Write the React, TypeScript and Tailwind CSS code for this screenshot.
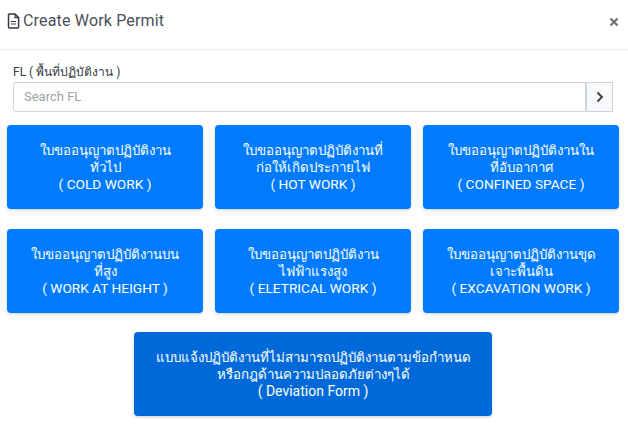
const font = "font-['Roboto','Noto_Sans','Noto_Sans_CJK_SC',sans-serif]";

const permits = [
  ["ใบขออนุญาตปฏิบัติงาน", "ทั่วไป", "( COLD WORK )"],
  ["ใบขออนุญาตปฏิบัติงานที่", "ก่อให้เกิดประกายไฟ", "( HOT WORK )"],
  ["ใบขออนุญาตปฏิบัติงานใน", "ที่อับอากาศ", "( CONFINED SPACE )"],
  ["ใบขออนุญาตปฏิบัติงานบน", "ที่สูง", "( WORK AT HEIGHT )"],
  ["ใบขออนุญาตปฏิบัติงาน", "ไฟฟ้าแรงสูง", "( ELETRICAL WORK )"],
  ["ใบขออนุญาตปฏิบัติงานขุด", "เจาะพื้นดิน", "( EXCAVATION WORK )"],
];

function Card({ lines }: { lines: string[] }) {
  return (
    <button className="h-[84px] rounded bg-[#007bff] text-white text-[13.3px] leading-[17px] text-center shadow-[0_1px_3px_rgba(0,0,0,0.2)] flex flex-col items-center justify-center">
      <span>{lines[0]}</span>
      <span>{lines[1]}</span>
      <span className="text-[13.7px]">{lines[2]}</span>
    </button>
  );
}

export default function App() {
  return (
    <div className={`w-[628px] h-[424px] bg-white overflow-hidden ${font}`}>
      <div className="h-[50px] border-b border-[#e9ecef] flex items-center justify-between pl-[7px] pr-[9px] pb-[8px]">
        <div className="flex items-center gap-[3px] text-[#495057] text-[16px] tracking-[0.17px]">
          <svg width="13" height="16" viewBox="0 0 13 16" fill="none" stroke="#343a40" strokeWidth="1.5">
            <path d="M1.5 2.2a1.2 1.2 0 0 1 1.2-1.2h5.3l3.6 3.6v9.2a1.2 1.2 0 0 1-1.2 1.2H2.7a1.2 1.2 0 0 1-1.2-1.2z" />
            <path d="M8 1v3.6h3.6M4 8.500h5M4 11h5" strokeWidth="1.2" />
          </svg>
          <span>Create Work Permit</span>
        </div>
        <svg width="10" height="10" viewBox="0 0 10 10" stroke="#777" strokeWidth="2.4" className="mt-[3px]">
          <path d="M1.500 1.500l7 7M8.500 1.500l-7 7" />
        </svg>
      </div>

      <div className="pl-[13px] pr-[15px] pt-[14px]">
        <div className="text-[12px] leading-[16px] text-[#343a40] mb-[2px]">FL ( พื้นที่ปฏิบัติงาน )</div>
        <div className="flex h-[30px]">
          <div className="flex-1 border border-[#ced4da] rounded-l-[3px] flex items-center pl-[10px] text-[13px] text-[#9aa1a8]">
            Search FL
          </div>
          <div className="w-[27px] border border-[#ced4da] bg-[#f8f9fa] flex items-center justify-center">
            <svg width="8" height="12" viewBox="0 0 8 12" fill="none" stroke="#343a40" strokeWidth="1.8">
              <path d="M1.500 1.500L6 6l-4.500 4.500" />
            </svg>
          </div>
        </div>
      </div>

      <div className="pl-[7px] pr-[9px] pt-[13px] grid grid-cols-3 gap-x-[12px] gap-y-[20px]">
        {permits.map((p) => (
          <Card key={p[2]} lines={p} />
        ))}
      </div>

      <div className="flex justify-center pt-[19px] pr-[2px]">
        <button className="w-[358px] h-[84px] rounded bg-[#0069d9] text-white text-[13.3px] leading-[17px] text-center shadow-[0_1px_3px_rgba(0,0,0,0.2)] flex flex-col items-center justify-center">
          <span>แบบแจ้งปฏิบัติงานที่ไม่สามารถปฏิบัติงานตามข้อกำหนด</span>
          <span>หรือกฎด้านความปลอดภัยต่างๆได้</span>
          <span className="text-[14px]">( Deviation Form )</span>
        </button>
      </div>
    </div>
  );
}
